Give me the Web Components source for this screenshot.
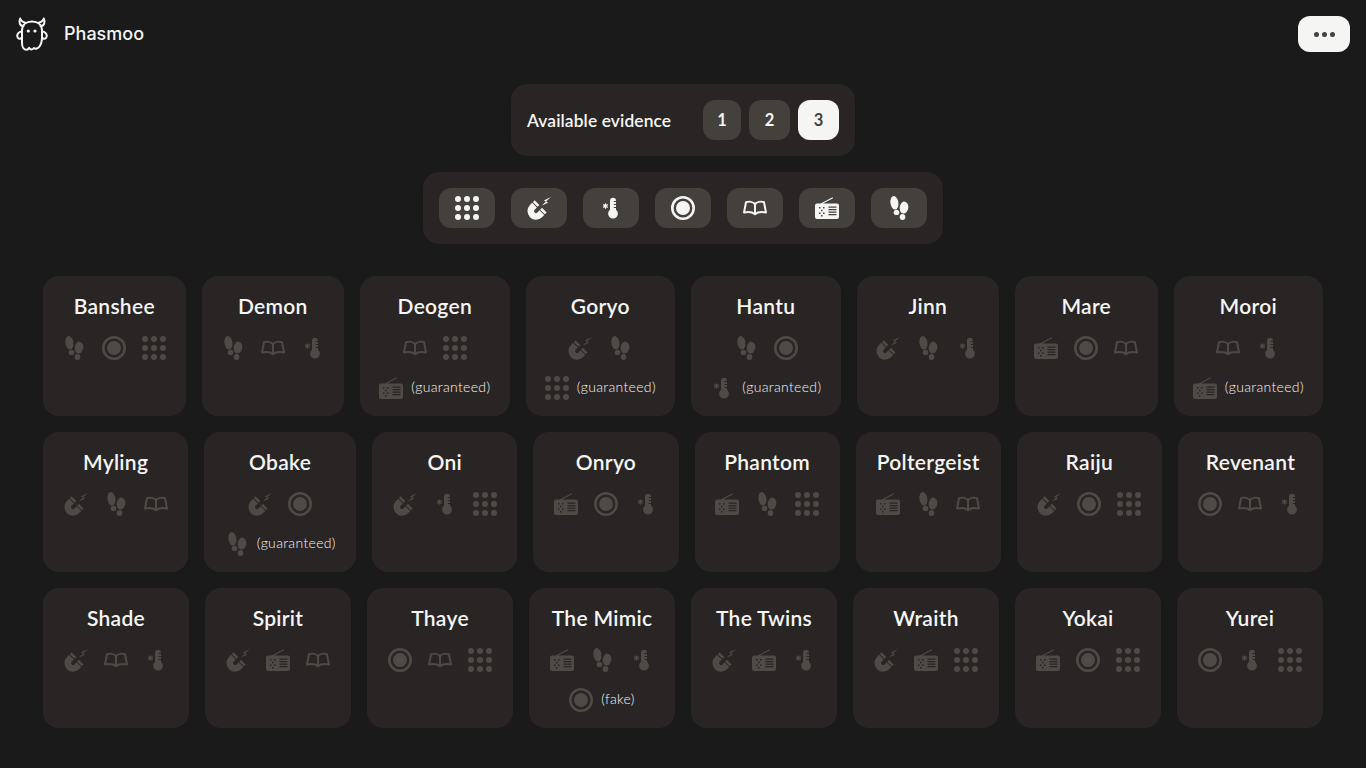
<!DOCTYPE html>
<html lang="en">
<head>
<meta charset="utf-8">
<title>Phasmoo</title>
<style>
    html, body { margin: 0; background: #1a1a1a; color: #f5f5f4; font-family: "Lato", "Noto Sans", sans-serif; }
</style>
</head>
<body>
<app-header></app-header>
<main-page>
    <count-panel></count-panel>
    <filter-panel></filter-panel>
    <ghost-list id="ghosts"></ghost-list>
</main-page>
<script>
    ((customElements, document) => {
        'use strict';
        const ICONS = {
            dots: '<g fill="currentColor"><circle cx="3" cy="3" r="3"/><circle cx="12" cy="3" r="3"/><circle cx="21" cy="3" r="3"/><circle cx="3" cy="12" r="3"/><circle cx="12" cy="12" r="3"/><circle cx="21" cy="12" r="3"/><circle cx="3" cy="21" r="3"/><circle cx="12" cy="21" r="3"/><circle cx="21" cy="21" r="3"/></g>',
            emf: '<g fill="none" stroke="currentColor" stroke-width="6.600"><path d="M7.500 9.200L5.300 11.400A5.200 5.200 0 0 0 12.700 18.800L14.900 16.600"/><path d="M8.200 8.500L10 6.700M15.500 16L17.300 14.200"/></g><path fill="currentColor" d="M24 1L16.800 4.400L19 5.600L14.800 9.400L21 6.800L19.200 5.300Z"/>',
            temp: '<path fill="currentColor" fill-rule="evenodd" d="M11 4.800a3 3 0 0 1 6 0V13.800a4.900 4.900 0 1 1-6 0ZM14.800 5h2.200V6h-2.200ZM14.800 8h2.200V9h-2.200ZM14.800 11h2.200V12h-2.200Z"/><g stroke="currentColor" stroke-width="1.300" stroke-linecap="round"><path d="M6.500 7.800V12.200M4.600 8.900L8.400 11.100M8.400 8.900L4.600 11.100"/></g>',
            orb: '<circle cx="12" cy="12" r="10.700" fill="none" stroke="currentColor" stroke-width="2.600"/><circle cx="12" cy="12" r="7" fill="currentColor"/>',
            book: '<g fill="none" stroke="currentColor" stroke-width="2" stroke-linejoin="round"><path d="M12 8C10 5.800 6 5.200 3 6.200L1 16.500C5 15.600 9.500 16 12 18.200C14.500 16 19 15.600 23 16.500L21 6.200C18 5.200 14 5.800 12 8Z"/><path d="M12 8V18"/></g>',
            radio: '<path fill="currentColor" fill-rule="evenodd" d="M2 7.500H5.700L17.500 1.200L18.100 2.200L8 7.500H22a2 2 0 0 1 2 2V21a2 2 0 0 1-2 2H2a2 2 0 0 1-2-2V9.500a2 2 0 0 1 2-2ZM13.500 10.500V11.700H21.500V10.500ZM13.500 13V14.200H21.500V13ZM13.500 15.500V16.700H21.500V15.500ZM13.500 18V19.200H21.500V18ZM4 11h1.500v1.500h-1.500ZM8 11h1.500v1.500h-1.500ZM6 13.700h1.500v1.500h-1.500ZM4 16.400h1.500v1.500h-1.500ZM8 16.400h1.500v1.500h-1.500ZM6 19h1.500v1.500h-1.500Z"/>',
            boots: '<g fill="currentColor"><ellipse cx="7.400" cy="6.800" rx="4" ry="6.800" transform="rotate(-8 7.400 6.800)"/><ellipse cx="9.500" cy="16.400" rx="2.800" ry="2.700"/><ellipse cx="17" cy="11.600" rx="4.300" ry="6" transform="rotate(8 17 11.600)"/><ellipse cx="15.500" cy="21" rx="2.800" ry="3"/></g>'
        };

        class EvIcon extends HTMLElement {
            connectedCallback() {
                const root = this.shadowRoot || this.attachShadow({mode: 'open'});
                root.innerHTML = `<style>
                    :host { display: block; width: 24px; height: 24px; flex: none; }
                    svg { display: block; width: 24px; height: 24px; overflow: visible; }
                </style><svg viewBox="0 0 24 24">${ICONS[this.getAttribute('type')]}</svg>`;
            }
        }
        customElements.define('ev-icon', EvIcon);

        class AppHeader extends HTMLElement {
            constructor() {
                super();
                const root = this.attachShadow({mode: 'open'});
                root.innerHTML = `<style>
                    :host { display: flex; justify-content: space-between; align-items: center; padding: 16px; }
                    .brand { display: flex; align-items: center; gap: 16px; font: 500 18px/32px "Inter", sans-serif; color: #f5f5f4; }
                    svg { display: block; width: 32px; height: 36px; }
                    button { width: 52px; height: 36px; border: 0; padding: 0; border-radius: 12px; background: #f5f5f4; display: flex; align-items: center; justify-content: center; gap: 3px; }
                    i { width: 5px; height: 5px; border-radius: 50%; background: #44403c; }
                </style>
                <div class="brand">
                    <svg viewBox="0 0 32 36" fill="none" stroke="#f5f5f4" stroke-width="2" stroke-linejoin="round" stroke-linecap="round">
                        <path d="M7.500 10C4 10 2.300 6.500 4.200 2.500C5 5 6.800 6.200 9.500 6.800"/>
                        <path d="M24.500 10C28 10 29.700 6.500 27.800 2.500C27 5 25.200 6.200 22.500 6.800"/>
                        <path d="M6 15.500C3 15.500 0.800 18 1.300 20.500C2 23.200 4.500 23.200 6 21.500"/>
                        <path d="M26 15.500C29 15.500 31.200 18 30.700 20.500C30 23.200 27.500 23.200 26 21.500"/>
                        <path d="M6 27V14.500C6 9 10 5.500 16 5.500C22 5.500 26 9 26 14.500V21C26 25 25 28.500 23.500 30.500C22 32.500 19.500 33.500 18 32C16.500 34 14 33.800 13 31.800C12.500 33 11.800 33.800 10.500 33.800C8 33.800 6 31 6 27Z"/>
                        <circle cx="12.300" cy="15" r="1.600" fill="#f5f5f4" stroke="none"/><circle cx="19" cy="15" r="1.600" fill="#f5f5f4" stroke="none"/>
                    </svg>
                    <span>Phasmoo</span>
                </div>
                <button aria-label="Menu"><i></i><i></i><i></i></button>`;
            }
        }
        customElements.define('app-header', AppHeader);

        class MainPage extends HTMLElement {
            constructor() {
                super();
                const root = this.attachShadow({mode: 'open'});
                root.innerHTML = `<style>
                    :host { display: flex; flex-direction: column; align-items: center; gap: 16px; margin-top: 16px; }
                </style><slot></slot>`;
            }
        }
        customElements.define('main-page', MainPage);

        class CountPanel extends HTMLElement {
            constructor() {
                super();
                const root = this.attachShadow({mode: 'open'});
                const nums = [[1, 38], [2, 41], [3, 41]];
                root.innerHTML = `<style>
                    :host { display: flex; align-items: center; padding: 16px; background: #292524; border-radius: 16px; }
                    span { width: 144px; margin-right: 32px; padding-top: 2px; white-space: nowrap; font: 600 17.400px/24px "Lato", sans-serif; letter-spacing: .1px; color: #f5f5f4; }
                    .btns { display: flex; gap: 8px; }
                    button { height: 40px; border: 0; padding: 0 0 1px; border-radius: 12px; background: #44403c; color: #f5f5f4; font: 700 16.500px "Lato", sans-serif; }
                    button.on { background: #f5f5f4; color: #44403c; }
                </style>
                <span>Available evidence</span>
                <div class="btns">${nums.map(([n, w]) => `<button style="width:${w}px" class="${n === 3 ? 'on' : ''}">${n}</button>`).join('')}</div>`;
            }
        }
        customElements.define('count-panel', CountPanel);

        class FilterPanel extends HTMLElement {
            constructor() {
                super();
                const root = this.attachShadow({mode: 'open'});
                root.innerHTML = `<style>
                    :host { display: flex; gap: 16px; padding: 16px; background: #292524; border-radius: 16px; }
                    button { width: 56px; height: 40px; border: 0; padding: 0; border-radius: 12px; background: #44403c; color: #f5f5f4; display: flex; align-items: center; justify-content: center; }
                </style>
                ${Object.keys(ICONS).map((k) => `<button aria-label="${k}"><ev-icon type="${k}"></ev-icon></button>`).join('')}`;
            }
        }
        customElements.define('filter-panel', FilterPanel);

        class GhostCard extends HTMLElement {
            connectedCallback() {
                const root = this.shadowRoot || this.attachShadow({mode: 'open'});
                const kind = this.getAttribute('kind');
                const extra = this.getAttribute('extra');
                root.innerHTML = `<style>
                    :host { display: block; flex: 1 1 auto; box-sizing: border-box; height: 140px; padding: 16px; background: #292524; border-radius: 16px; color: #4e4a46; }
                    h2 { margin: 0 0 16px; height: 28px; width: 0; min-width: 100%; white-space: nowrap; display: flex; justify-content: center; font: 600 21px/27px "Lato", sans-serif; letter-spacing: .3px; color: #f5f5f4; }
                    .icons { display: flex; justify-content: center; gap: 16px; }
                    .extra { display: flex; justify-content: center; align-items: center; gap: 8px; margin-top: 16px; }
                    .note { padding-bottom: 2px; font: 300 14px/22px "Lato", sans-serif; letter-spacing: .33px; color: #f5f5f4; white-space: nowrap; }
                    .note.guaranteed { width: 79px; }
                </style>
                <h2>${this.getAttribute('name')}</h2>
                <div class="icons"><slot></slot></div>
                ${extra ? `<div class="extra"><ev-icon type="${extra}"></ev-icon><span class="note ${kind}">(${kind})</span></div>` : ''}`;
            }
        }
        customElements.define('ghost-card', GhostCard);

        class GhostList extends HTMLElement {
            constructor() {
                super();
                const root = this.attachShadow({mode: 'open'});
                root.innerHTML = `<style>
                    :host { display: flex; flex-wrap: wrap; gap: 16px; width: 1280px; margin-top: 16px; }
                </style><slot></slot>`;
            }
        }
        customElements.define('ghost-list', GhostList);

        const GHOSTS = [
            ['Banshee', 'boots orb dots'],
            ['Demon', 'boots book temp'],
            ['Deogen', 'book dots', 'radio', 'guaranteed'],
            ['Goryo', 'emf boots', 'dots', 'guaranteed'],
            ['Hantu', 'boots orb', 'temp', 'guaranteed'],
            ['Jinn', 'emf boots temp'],
            ['Mare', 'radio orb book'],
            ['Moroi', 'book temp', 'radio', 'guaranteed'],
            ['Myling', 'emf boots book'],
            ['Obake', 'emf orb', 'boots', 'guaranteed'],
            ['Oni', 'emf temp dots'],
            ['Onryo', 'radio orb temp'],
            ['Phantom', 'radio boots dots'],
            ['Poltergeist', 'radio boots book'],
            ['Raiju', 'emf orb dots'],
            ['Revenant', 'orb book temp'],
            ['Shade', 'emf book temp'],
            ['Spirit', 'emf radio book'],
            ['Thaye', 'orb book dots'],
            ['The Mimic', 'radio boots temp', 'orb', 'fake'],
            ['The Twins', 'emf radio temp'],
            ['Wraith', 'emf radio dots'],
            ['Yokai', 'radio orb dots'],
            ['Yurei', 'orb temp dots']
        ];
        const list = document.querySelector('#ghosts');
        GHOSTS.forEach(([name, icons, extra, kind]) => {
            const card = document.createElement('ghost-card');
            card.setAttribute('name', name);
            if (extra) {
                card.setAttribute('extra', extra);
                card.setAttribute('kind', kind);
            }
            icons.split(' ').forEach((type) => {
                const icon = document.createElement('ev-icon');
                icon.setAttribute('type', type);
                card.appendChild(icon);
            });
            list.appendChild(card);
        });
    })(window.customElements, document);
</script>
</body>
</html>
